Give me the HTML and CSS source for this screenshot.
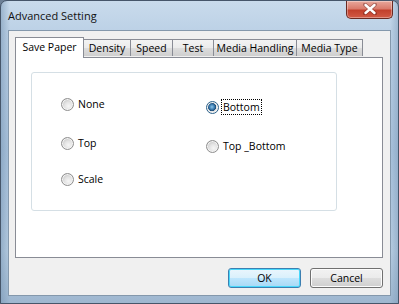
FILE: index.html
```html
<!DOCTYPE html>
<html>
<head>
<meta charset="utf-8">
<link rel="stylesheet" href="styles.css">
</head>
<body>
<div class="window">
  <div class="titlebar">
    <span class="title">Advanced Setting</span>
    <div class="close">
      <svg width="14" height="12" viewBox="0 0 14 12"><path d="M2 1.5 L12 10.5 M12 1.5 L2 10.5" stroke="#4a1010" stroke-width="4" stroke-linecap="round" opacity="0.35"/><path d="M2.5 2 L11.5 10 M11.5 2 L2.5 10" stroke="#ffffff" stroke-width="2.4" stroke-linecap="round"/></svg>
    </div>
  </div>
  <div class="client">
    <div class="tabctl">
      <div class="tabstrip">
        <div class="tab sel w-save">Save Paper</div>
        <div class="tab w-density">Density</div>
        <div class="tab w-speed">Speed</div>
        <div class="tab w-test">Test</div>
        <div class="tab w-mh">Media Handling</div>
        <div class="tab w-mt">Media Type</div>
      </div>
      <div class="panel">
        <div class="group">
          <div class="col col-left">
            <div class="radio r1"><span class="dot"></span><span class="lbl">None</span></div>
            <div class="radio r2"><span class="dot"></span><span class="lbl">Top</span></div>
            <div class="radio r3"><span class="dot"></span><span class="lbl">Scale</span></div>
          </div>
          <div class="col col-right">
            <div class="radio r1"><span class="dot on"></span><span class="lbl focus">Bottom</span></div>
            <div class="radio r2"><span class="dot"></span><span class="lbl">Top _Bottom</span></div>
          </div>
        </div>
      </div>
    </div>
    <div class="buttons">
      <div class="btn default">OK</div>
      <div class="btn">Cancel</div>
    </div>
  </div>
</div>
</body>
</html>
```
FILE: styles.css
```css
html, body { margin: 0; padding: 0; }
body { width: 399px; height: 304px; overflow: hidden; background: #6d8096; font-family: "Open Sans", "Liberation Sans", sans-serif; font-size: 10.5px; color: #000; white-space: nowrap; }
.window {
  width: 399px; height: 304px; box-sizing: border-box;
  border: 1px solid #46566a; border-radius: 7px 7px 0 0;
  background:
    linear-gradient(90deg, rgba(120,150,180,0.55) 0px, rgba(190,212,232,0) 9px, rgba(190,212,232,0) 389px, rgba(120,150,180,0.55) 399px),
    linear-gradient(180deg, #c9dbec 0px, #bcd1e6 30px, #a9c2dc 150px, #b7cde2 250px, #9db6cf 304px);
  display: flex; flex-direction: column;
  padding: 0 7px 7px 7px;
}
.titlebar { height: 29px; display: flex; align-items: flex-start; }
.title { margin-top: 7px; margin-left: 0px; font-size: 11px; color: #111; }
.close {
  margin-left: auto; margin-right: -2px; width: 47px; height: 18px; box-sizing: border-box;
  border: 1px solid #6a2a22; border-top: none; border-radius: 0 0 5px 5px;
  background: linear-gradient(180deg, #e8a89c 0%, #d97b6c 45%, #c2402c 55%, #d25a45 100%);
  display: flex; align-items: center; justify-content: center;
  box-shadow: inset 0 0 0 1px rgba(255,255,255,0.35);
}
.close svg { display: block; margin-top: -1px; }
.client {
  flex: 1; background: #f0f0f0; border: 1px solid #8498ac;
  display: flex; flex-direction: column;
  padding: 6px 7px 6px 6px;
}
.tabctl { display: flex; flex-direction: column; }
.tabstrip { display: flex; align-items: flex-end; height: 20px; padding-left: 0; position: relative; z-index: 1; }
.tab {
  height: 17px; box-sizing: border-box; margin-left: -1px; margin-bottom: 1px;
  border: 1px solid #898c95; border-bottom: none;
  background: linear-gradient(180deg, #f3f3f3 0%, #ebebeb 50%, #dddddd 51%, #cfcfcf 100%);
  display: flex; align-items: center; justify-content: center;
  padding-top: 0px;
}
.tab.sel {
  height: 21px; margin-bottom: -1px; margin-left: 0; background: #fff; margin-right: -1px; padding-top: 0; padding-bottom: 3px;
  position: relative; z-index: 2;
}
.w-save { width: 69px; }
.w-density { width: 48px; margin-left: 0; }
.w-speed { width: 43px; }
.w-test { width: 42px; }
.w-mh { width: 84px; }
.w-mt { width: 67px; }
.panel { height: 201px; box-sizing: border-box; background: #fff; border: 1px solid #898c95; padding: 14px 45px 0 15px; }
.group { height: 139px; box-sizing: border-box; border: 1px solid #d5dfe5; border-radius: 3px; display: flex; }
.col { display: flex; flex-direction: column; }
.col-left { width: 145px; padding-left: 29px; padding-top: 23px; }
.col-right { padding-left: 0; padding-top: 26px; }
.col-left .r2 { margin-top: 23px; }
.col-left .r3 { margin-top: 20px; }
.col-right .r2 { margin-top: 23px; }
.radio { display: flex; align-items: center; height: 16px; }
.dot {
  width: 13px; height: 13px; box-sizing: border-box; border-radius: 50%;
  border: 1px solid #8f8f8f;
  background: radial-gradient(circle at 60% 65%, #f6f6f6 0%, #e4e4e4 40%, #c8c8c8 75%, #b8b8b8 100%);
  box-shadow: inset 0 0 0 1px #f4f4f4;
  margin-right: 3px; flex: none;
}
.dot.on {
  border-color: #2c628b;
  background: radial-gradient(circle at 45% 45%, #8dc6ea 0%, #3f7fb3 28%, #1c4c78 45%, #e2e2e2 52%, #f2f2f2 100%);
}
.lbl { line-height: 14px; padding: 0 1px; }
.lbl.focus { outline: 1px dotted #000; outline-offset: 0; }
.buttons { display: flex; justify-content: flex-end; gap: 9px; margin-top: 10px; }
.btn {
  width: 73px; height: 20px; box-sizing: border-box; border: 1px solid #707070; border-radius: 3px;
  background: linear-gradient(180deg, #f2f2f2 0%, #ebebeb 50%, #dddddd 51%, #cfcfcf 100%);
  box-shadow: inset 0 0 0 1px #fcfcfc;
  display: flex; align-items: center; justify-content: center;
}
.btn.default {
  border-color: #3c7fb1;
  background: linear-gradient(180deg, #eaf6fd 0%, #d9f0fc 50%, #bee6fd 51%, #a7d9f5 100%);
  box-shadow: inset 0 0 0 1px #48d8fb;
}
```
